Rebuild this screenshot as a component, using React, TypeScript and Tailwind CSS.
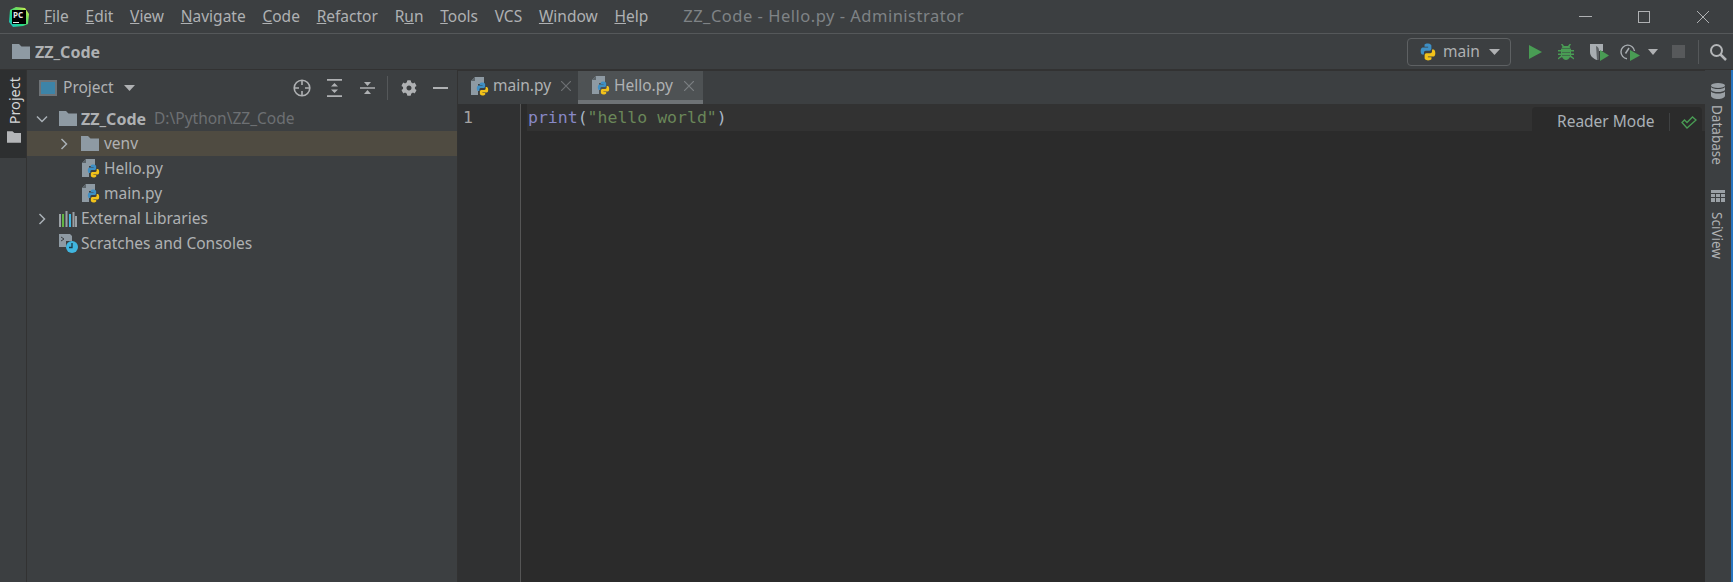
import { FaCog } from 'react-icons/fa';

const sans = { fontFamily: '"Noto Sans", sans-serif' };
const mono = { fontFamily: '"DejaVu Sans Mono", monospace' };

const menus: [string, string, string][] = [
  ['', 'F', 'ile'],
  ['', 'E', 'dit'],
  ['', 'V', 'iew'],
  ['', 'N', 'avigate'],
  ['', 'C', 'ode'],
  ['', 'R', 'efactor'],
  ['R', 'u', 'n'],
  ['', 'T', 'ools'],
  ['VCS', '', ''],
  ['', 'W', 'indow'],
  ['', 'H', 'elp'],
];

const Folder = ({ className = 'w-[18px] h-[15px]', fill = '#8e9aa3' }: { className?: string; fill?: string }) => (
  <svg viewBox="0 0 18 15" className={className}>
    <path d="M0 0h7l2.500 2.500H18V15H0z" fill={fill} />
  </svg>
);

const PythonLogo = ({ className }: { className: string }) => {
  const half = 'M8 .5c-3.300 0-3.100 1.400-3.100 1.400v1.500H8.100v.5H3.600S1.500 3.700 1.500 7s1.800 3.200 1.800 3.200h1.100V8.600s-.1-1.800 1.800-1.800h3.100s1.700 0 1.700-1.700V2.200S10.300.5 8 .5z';
  return (
    <svg viewBox="1 0 14 16" className={className}>
      <path d={half} fill="#3e8fc4" />
      <path d={half} fill="#f2c21a" transform="rotate(180 8 8)" />
    </svg>
  );
};

const PyFile = () => (
  <span className="relative block w-[18px] h-[19px] shrink-0">
    <svg viewBox="0 0 18 19" className="absolute inset-0 w-[18px] h-[19px]">
      <path d="M4 0h9v7H7v11H0V4z" fill="#8e9aa3" />
      <path d="M4 0v4H0z" fill="#5c6469" />
    </svg>
    <PythonLogo className="absolute right-0 bottom-0 w-[13px] h-[14px]" />
  </span>
);

const Chevron = ({ open }: { open?: boolean }) => (
  <svg viewBox="0 0 12 12" className="w-3 h-3" fill="none" stroke="#a9b0b6" strokeWidth="1.500">
    <path d={open ? 'M1 3.500l5 5 5-5' : 'M3.500 1l5 5-5 5'} />
  </svg>
);

const CloseX = ({ color }: { color: string }) => (
  <svg viewBox="0 0 10 10" className="w-[10px] h-[10px]" fill="none" stroke={color} strokeWidth="1.200">
    <path d="M0 0l10 10M10 0 0 10" />
  </svg>
);

const TreeRow = ({ children, indent, active }: { children: React.ReactNode; indent: string; active?: boolean }) => (
  <div className={`h-[25px] flex items-center ${indent} ${active ? 'bg-[#4f4b41]' : ''}`}>{children}</div>
);

const PanelIcons = () => (
  <div className="flex items-center text-[#afb1b3]">
    <svg viewBox="0 0 18 18" className="w-[18px] h-[18px]" fill="none" stroke="currentColor" strokeWidth="1.600">
      <circle cx="9" cy="9" r="7.800" />
      <path d="M9 1v5M9 12v5M1 9h5M12 9h5" />
    </svg>
    <svg viewBox="0 0 15 18" className="w-[15px] h-[18px] ml-[16px]" fill="currentColor">
      <path d="M0 0h15v1.800H0zM0 16.200h15V18H0zM7.500 4 11 7.500H4zM7.500 14 4 10.500h7z" />
    </svg>
    <svg viewBox="0 0 15 18" className="w-[15px] h-[18px] ml-[18px]" fill="currentColor">
      <path d="M0 8.200h15v1.600H0zM7.500 7 4 3h7zM7.500 11l3.500 4H4z" />
    </svg>
    <span className="w-px h-6 bg-[#55585a] ml-[12px]" />
    <FaCog className="w-4 h-4 ml-[13px]" />
    <span className="w-[15px] h-[2px] bg-current ml-[16px]" />
  </div>
);

const RunIcons = () => (
  <div className="flex items-center">
    <svg viewBox="0 0 14 14" className="w-[14px] h-[14px]">
      <path d="M0 0l13 7-13 7z" fill="#499c54" />
    </svg>
    <svg viewBox="0 0 16 16" className="w-4 h-4 ml-[15px]">
      <path d="M3 0h1.500l1.500 2h4l1.500-2H13l-1.500 3 1.500 1.500H3L4.500 3zM0 6h3V5h10v1h3v1.500h-3v2h3V11h-3v.5l3 2.500v1.500L12 13c-1 1.800-2.500 3-4 3s-3-1.200-4-3l-4 2.500V14l3-2.500V11H0V9.500h3v-2H0z" fill="#499c54" />
      <path d="M4 8h8v1H4zM4 11h8v1H4z" fill="#3c3f41" opacity=".5" />
    </svg>
    <span className="relative block w-[19px] h-[18px] ml-[16px]">
      <svg viewBox="0 0 19 18" className="absolute inset-0 w-[19px] h-[18px]">
        <path d="M0 1h13v7H9v8l-2 1c-4-1.500-7-4-7-8z" fill="#a8adb1" />
        <path d="M6 3c2 1 3 2 3 5v8l-2 1z" fill="#5d6164" />
        <path d="M10 7l9 5.500-9 5.500z" fill="#499c54" />
      </svg>
    </span>
    <span className="relative block w-[20px] h-[18px] ml-[11px]">
      <svg viewBox="0 0 20 18" className="absolute inset-0 w-5 h-[18px]" fill="none">
        <path d="M7 15.700A6.800 6.800 0 1 1 14.500 8" stroke="#a8adb1" strokeWidth="1.400" />
        <path d="M9 5 5.500 10.500" stroke="#a8adb1" strokeWidth="1.500" />
        <path d="M10 7l10 5.500L10 18z" fill="#499c54" />
      </svg>
    </span>
    <svg viewBox="0 0 10 6" className="w-[10px] h-[6px] ml-[8px]">
      <path d="M0 0h10L5 6z" fill="#afb1b3" />
    </svg>
    <span className="w-[13px] h-[13px] bg-[#57595b] ml-[14px]" />
    <span className="w-px h-6 bg-[#55585a] ml-[13px]" />
    <svg viewBox="0 0 18 18" className="w-[18px] h-[18px] ml-[10px]" fill="none" stroke="#b4b6b8" strokeWidth="2">
      <circle cx="7.500" cy="7.500" r="5.500" />
      <path d="M11.500 11.500 17 17" strokeWidth="2.500" />
    </svg>
  </div>
);

const PcLogo = () => (
  <span className="relative block w-5 h-5 ml-[9px] shrink-0">
    <svg viewBox="0 0 20 20" className="absolute inset-0 w-5 h-5">
      <defs>
        <linearGradient id="pc-blob" x1="0" y1="1" x2="1" y2="0">
          <stop offset="0" stopColor="#1fb4c9" />
          <stop offset=".35" stopColor="#21d789" />
          <stop offset=".7" stopColor="#7ee05a" />
          <stop offset="1" stopColor="#fcf84a" />
        </linearGradient>
      </defs>
      <path d="M1 3l6-3 9 1 4 6-1 10-5 2-10 1-4-5z" fill="url(#pc-blob)" />
    </svg>
    <span className="absolute left-[3px] top-[3px] w-[14px] h-[14px] bg-black text-[#e8e8e8] text-[8px] font-bold leading-[10px] pl-px">
      PC
      <span className="absolute left-px bottom-px w-[6px] h-px bg-[#e8e8e8]" />
    </span>
  </span>
);

export default function App() {
  return (
    <div className="w-[1733px] h-[582px] flex flex-col overflow-hidden bg-[#3c3f41] text-[#afb1b3] text-[15.500px]" style={sans}>
      <div className="h-[34px] shrink-0 flex items-center border-b border-[#55585a]">
        <PcLogo />
        <nav className="flex ml-[15px] gap-[16.750px]">
          {menus.map(([pre, key, rest]) => (
            <span key={pre + key + rest}>
              {pre}
              <u>{key}</u>
              {rest}
            </span>
          ))}
        </nav>
        <span className="ml-[35px] text-[#7f8386] text-[16.500px] tracking-[0.500px]">ZZ_Code - Hello.py - Administrator</span>
        <div className="ml-auto flex items-center mr-[24px]">
          <span className="w-[13px] h-px bg-[#afb1b3]" />
          <span className="w-3 h-3 border border-[#afb1b3] ml-[46px]" />
          <svg viewBox="0 0 12 12" className="w-3 h-3 ml-[47px]" fill="none" stroke="#afb1b3">
            <path d="M0 0l12 12M12 0 0 12" />
          </svg>
        </div>
      </div>

      <div className="h-[36px] shrink-0 flex items-center border-b border-[#323232] pl-3 pr-[6px]">
        <Folder />
        <span className="ml-[5px] font-bold text-[16px]">ZZ_Code</span>
        <div className="ml-auto flex items-center">
          <div className="w-[104px] h-[28px] rounded-[4px] border border-[#5e6163] flex items-center pl-[11px]">
            <PythonLogo className="w-[18px] h-[18px]" />
            <span className="ml-[6px]">main</span>
            <svg viewBox="0 0 11 6" className="w-[11px] h-[6px] ml-[9px]">
              <path d="M0 0h11L5.500 6z" fill="#afb1b3" />
            </svg>
          </div>
          <div className="ml-[18px]">
            <RunIcons />
          </div>
        </div>
      </div>

      <div className="flex-1 flex min-h-0">
        <aside className="w-[27px] shrink-0 border-r border-[#323232]">
          <div className="h-[88px] bg-[#2d2f30] flex flex-col items-center pt-[7px] pl-[3px] text-[#d5d7d8]">
            <span className="[writing-mode:vertical-rl] rotate-180 text-[14.500px] leading-none">Project</span>
            <Folder className="w-[14px] h-[12px] mt-[7px] -ml-[2px]" fill="#b4b6b8" />
          </div>
        </aside>

        <section className="w-[431px] shrink-0 border-r border-[#323232]">
          <div className="h-[36px] flex items-center pb-px pl-[12px] pr-[9px]">
            <span className="block w-[18px] h-[16px] border-2 border-[#6e7377] bg-[#3d84a8]" />
            <span className="ml-[6px]">Project</span>
            <svg viewBox="0 0 11 6" className="w-[11px] h-[6px] ml-[10px]">
              <path d="M0 0h11L5.500 6z" fill="#afb1b3" />
            </svg>
            <div className="ml-auto">
              <PanelIcons />
            </div>
          </div>
          <TreeRow indent="pl-[9px]">
            <Chevron open />
            <Folder className="w-[18px] h-[15px] ml-[11px]" />
            <span className="ml-[4px] font-bold text-[16px]">ZZ_Code</span>
            <span className="ml-2 text-[#6d7073]">D:\Python\ZZ_Code</span>
          </TreeRow>
          <TreeRow indent="pl-[31px]" active>
            <Chevron />
            <Folder className="w-[18px] h-[15px] ml-[11px]" />
            <span className="ml-[5px]">venv</span>
          </TreeRow>
          <TreeRow indent="pl-[55px]">
            <PyFile />
            <span className="ml-[4px]">Hello.py</span>
          </TreeRow>
          <TreeRow indent="pl-[55px]">
            <PyFile />
            <span className="ml-[4px]">main.py</span>
          </TreeRow>
          <TreeRow indent="pl-[9px]">
            <Chevron />
            <svg viewBox="0 0 18 16" className="w-[18px] h-4 ml-[11px]">
              <path d="M0 3h2v13H0zM3 3h2v13H3z" fill="#9aa0a5" />
              <path d="M3 3h2v13H3z" fill="#62b543" />
              <path d="M6.500 0h2v16h-2z" fill="#9aa0a5" />
              <path d="M10 3h2v13h-2z" fill="#40b6e0" />
              <path d="M13.500 1h2v15h-2zM16 5h2v11h-2z" fill="#9aa0a5" />
            </svg>
            <span className="ml-[4px]">External Libraries</span>
          </TreeRow>
          <TreeRow indent="pl-[32px]">
            <span className="relative block w-[19px] h-[19px]">
              <svg viewBox="0 0 19 19" className="absolute inset-0 w-[19px] h-[19px]">
                <path d="M0 0h11l2 2v5H7v6H0z" fill="#8e9aa3" />
                <path d="M2 3l3 2-3 2" fill="none" stroke="#3c3f41" />
                <circle cx="13" cy="13" r="6" fill="#40b6e0" />
                <path d="M13 9v4.500H10" fill="none" stroke="#1d3a46" strokeWidth="1.300" />
              </svg>
            </span>
            <span className="ml-[3px]">Scratches and Consoles</span>
          </TreeRow>
        </section>

        <main className="flex-1 min-w-0 flex flex-col">
          <div className="h-[34px] shrink-0 flex items-stretch border-t border-[#323232]">
            <div className="w-[120px] flex items-center pl-[13px] pb-[3px]">
              <PyFile />
              <span className="ml-[4px]">main.py</span>
              <span className="ml-[10px]">
                <CloseX color="#6d7073" />
              </span>
            </div>
            <div className="w-[125px] flex items-center pl-[14px] bg-[#4e5254] border-b-[4px] border-[#6e7275]">
              <PyFile />
              <span className="ml-[4px]">Hello.py</span>
              <span className="ml-[11px]">
                <CloseX color="#7b7f82" />
              </span>
            </div>
          </div>
          <div className="flex-1 flex bg-[#2b2b2b] relative">
            <div className="w-[63px] bg-[#303132] border-r border-[#555555] shrink-0 pl-[5px] text-[16.500px] leading-[27px] text-[#a4a3a3]" style={mono}>
              <div className="h-[27px]">1</div>
            </div>
            <div className="flex-1 pl-[6px]">
              <div className="h-[27px] pl-px bg-[#323232] text-[16.500px] leading-[27px]" style={mono}>
                <span className="text-[#8888c6]">print</span>
                <span className="text-[#a9b7c6]">(</span>
                <span className="text-[#6a8759]">"hello world"</span>
                <span className="text-[#a9b7c6]">)</span>
              </div>
            </div>
            <div className="absolute right-[3px] top-[3px] w-[170px] h-[24px] pt-[6px] rounded-t-[4px] bg-[#2b2b2b] flex items-center pl-[25px] text-[#a9b0b6]">
              <span>Reader Mode</span>
              <span className="w-px h-[18px] bg-[#3f4142] ml-[14px]" />
              <svg viewBox="0 0 16 13" className="w-[16px] h-[13px] ml-[11px]" fill="none" stroke="#499c54" strokeWidth="1.300">
                <path d="M1 6.500l2.500-2.500L6 6.500 11.500 1 15 4l-9 8z" />
              </svg>
            </div>
          </div>
        </main>

        <aside className="w-[28px] shrink-0 border-r-2 border-[#2675bf] flex flex-col items-center pt-[13px] text-[#afb1b3]">
          <svg viewBox="0 0 14 16" className="w-[14px] h-4" fill="#9aa0a5">
            <ellipse cx="7" cy="2.500" rx="7" ry="2.500" />
            <path d="M0 4c1 1.500 4 2 7 2s6-.5 7-2v3c-1 1.500-4 2-7 2S1 8.500 0 7zM0 8.500c1 1.500 4 2 7 2s6-.5 7-2v4c0 2-3 3.500-7 3.500s-7-1.500-7-3.500z" />
          </svg>
          <span className="[writing-mode:vertical-rl] text-[13.500px] leading-none mt-[6px] -ml-[3px]">Database</span>
          <svg viewBox="0 0 14 12" className="w-[14px] h-3 mt-[25px]" fill="#9aa0a5">
            <path d="M0 0h14v3H0zM0 4h4v3H0zM5 4h4v3H5zM10 4h4v3h-4zM0 8h4v4H0zM5 8h4v4H5zM10 8h4v4h-4z" />
          </svg>
          <span className="[writing-mode:vertical-rl] text-[13.500px] leading-none mt-[10px] -ml-[3px]">SciView</span>
        </aside>
      </div>
    </div>
  );
}
